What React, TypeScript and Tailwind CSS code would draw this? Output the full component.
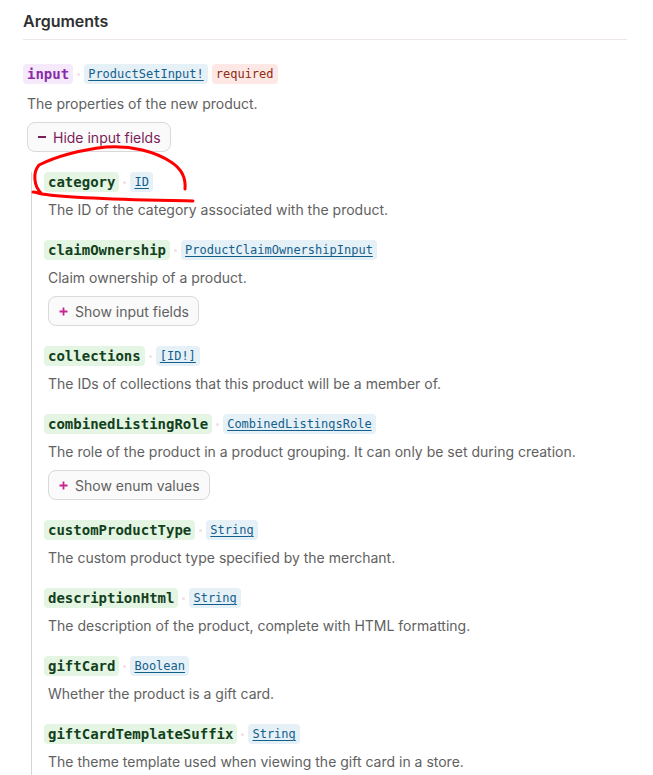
import { ReactNode } from 'react';

type Field = {
  name: string;
  type: string;
  description: string;
  button?: string;
};

const fields: Field[] = [
  { name: 'category', type: 'ID', description: 'The ID of the category associated with the product.' },
  {
    name: 'claimOwnership',
    type: 'ProductClaimOwnershipInput',
    description: 'Claim ownership of a product.',
    button: 'Show input fields',
  },
  { name: 'collections', type: '[ID!]', description: 'The IDs of collections that this product will be a member of.' },
  {
    name: 'combinedListingRole',
    type: 'CombinedListingsRole',
    description: 'The role of the product in a product grouping. It can only be set during creation.',
    button: 'Show enum values',
  },
  { name: 'customProductType', type: 'String', description: 'The custom product type specified by the merchant.' },
  { name: 'descriptionHtml', type: 'String', description: 'The description of the product, complete with HTML formatting.' },
  { name: 'giftCard', type: 'Boolean', description: 'Whether the product is a gift card.' },
  {
    name: 'giftCardTemplateSuffix',
    type: 'String',
    description: 'The theme template used when viewing the gift card in a store.',
  },
];

const mono = "font-['DejaVu_Sans_Mono',monospace]";

function Dot() {
  return <span className="h-[3px] w-[3px] rounded-full bg-[#f6dde6]" />;
}

function Chip({ className, children }: { className: string; children: ReactNode }) {
  return (
    <span className={`flex h-5 items-center rounded-[4px] px-1 leading-5 ${mono} ${className}`}>
      {children}
    </span>
  );
}

function TypeChip({ children }: { children: ReactNode }) {
  return (
    <Chip className="bg-[#e6f0f7] text-[12px] text-[#135f8c] underline underline-offset-2">{children}</Chip>
  );
}

function ToggleButton({ label, open }: { label: string; open?: boolean }) {
  return (
    <button
      className={`mt-2 flex h-[30px] items-center gap-[7px] rounded-lg border border-[#d9d9d9] bg-[#fafafa] pl-[10px] pr-[9px] text-[14px] ${
        open ? 'text-[#7b1e5c]' : 'text-[#616161]'
      }`}
    >
      {open ? (
        <span className="h-[2px] w-2 bg-[#7b1e5c]" />
      ) : (
        <svg width="9" height="9" viewBox="0 0 9 9">
          <path d="M4.5 0.5v8M0.5 4.5h8" stroke="#c8238f" strokeWidth="1.8" />
        </svg>
      )}
      {label}
    </button>
  );
}

function FieldRow({ field }: { field: Field }) {
  return (
    <div className="flex flex-col items-start">
      <div className="flex items-center gap-1">
        <Chip className="bg-[#e4f5e4] text-[14px] font-bold text-[#12401b]">{field.name}</Chip>
        <Dot />
        <TypeChip>{field.type}</TypeChip>
      </div>
      <p className="mt-2 pl-1 text-[14px] leading-5 text-[#616161]">{field.description}</p>
      {field.button && (
        <div className="pl-1">
          <ToggleButton label={field.button} />
        </div>
      )}
    </div>
  );
}

export default function App() {
  return (
    <div className="relative h-[775px] overflow-hidden bg-white pl-[23px] pr-[26px] font-['Inter',sans-serif]">
      <h2 className="border-b border-[#efe6ea] pb-[6px] pt-[9px] text-[16px] font-semibold leading-6 text-[#303030]">
        Arguments
      </h2>

      <div className="mt-[24px] flex flex-col items-start">
        <div className="flex items-center gap-1">
          <Chip className="bg-[#f5e9fb] text-[14px] font-bold text-[#8a2ca8]">input</Chip>
          <Dot />
          <TypeChip>ProductSetInput!</TypeChip>
          <Chip className="bg-[#fee8e6] text-[12px] text-[#8c2a12]">required</Chip>
        </div>
        <p className="mt-[10px] pl-1 text-[14px] leading-5 text-[#616161]">The properties of the new product.</p>
        <div className="pl-1">
          <ToggleButton label="Hide input fields" open />
        </div>

        <div className="ml-2 mt-5 flex flex-col gap-5 self-stretch border-l border-[#d4d4d4] pb-10 pl-3">
          {fields.map((f) => (
            <FieldRow key={f.name} field={f} />
          ))}
        </div>
      </div>

      {/* hand-drawn annotation */}
      <svg className="pointer-events-none absolute left-0 top-0" width="653" height="260" viewBox="0 0 653 260">
        <path
          d="M185 189 C186 178 182 169 171 162 C156 152 131 145 106 147 C81 150 57 156 39 165 C33 172 33 186 42 194 C75 199 140 200 193 201 M42 194 C38 193 35 192 33 192"
          fill="none"
          stroke="#f00"
          strokeWidth="3"
          strokeLinecap="round"
        />
      </svg>
    </div>
  );
}
